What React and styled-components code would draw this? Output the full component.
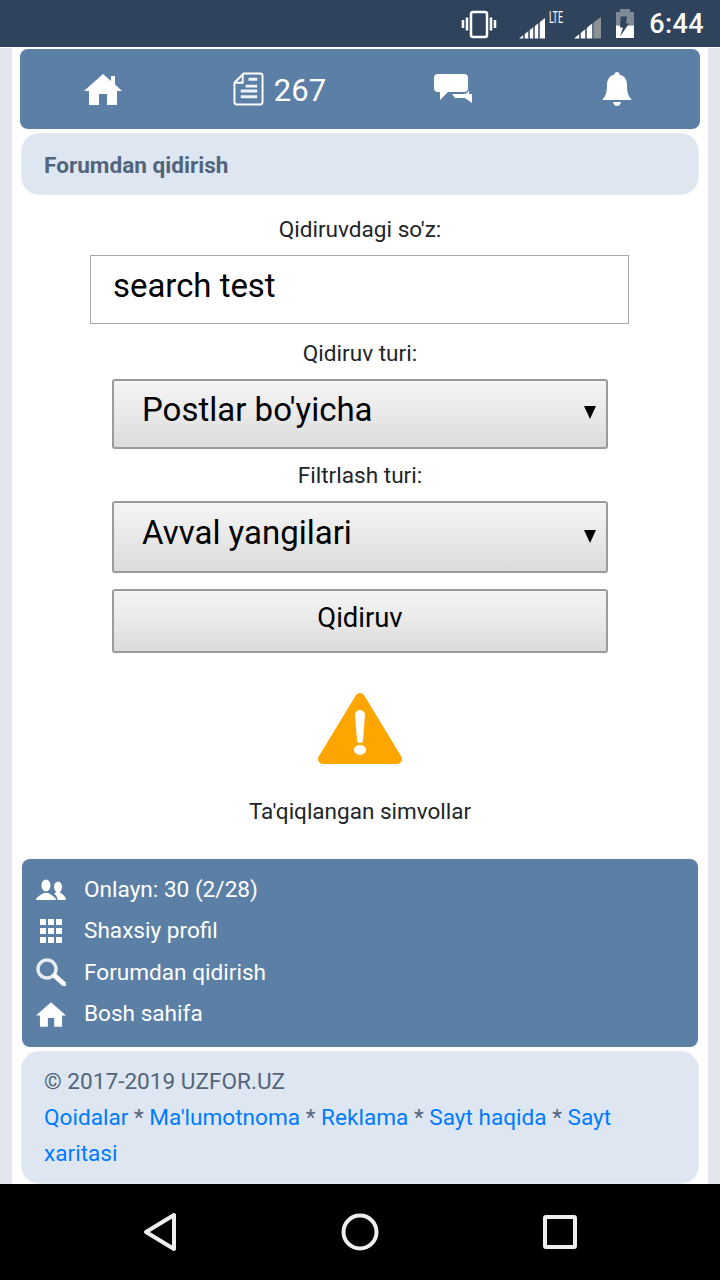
import React from 'react';
import styled, { createGlobalStyle } from 'styled-components';

const Global = createGlobalStyle`
  html, body { margin: 0; padding: 0; background: #e2e6ec; }
  * { box-sizing: border-box; }
  body { font-family: Roboto, "Liberation Sans", sans-serif; }
`;

const Screen = styled.div`
  width: 720px;
  height: 1280px;
  display: flex;
  flex-direction: column;
  overflow: hidden;
`;

const StatusBar = styled.div`
  height: 48px;
  flex: none;
  background: #2f445c;
  border-bottom: 1px solid #fff;
  display: flex;
  align-items: center;
  justify-content: flex-end;
  color: #fff;
  padding: 0 16px 0 0;
`;
const StatusIcon = styled.svg`
  display: block;
  flex: none;
  overflow: visible;
  margin-right: ${({ $gap }) => $gap || 0}px;
`;
const Clock = styled.span`
  font-size: 27px;
  font-weight: 500;
  line-height: 48px;
  letter-spacing: 0.4px;
`;

const Content = styled.main`
  flex: 1;
  min-height: 0;
  margin: 0 12px;
  background: #fff;
  padding: 1px 8px 0;
  display: flex;
  flex-direction: column;
  overflow: hidden;
`;

const TopNav = styled.nav`
  height: 80px;
  flex: none;
  background: #5c7fa6;
  border-radius: 8px;
  display: grid;
  grid-template-columns: 166px 187px 160px 167px;
  align-items: center;
  color: #fff;
`;
const NavItem = styled.div`
  display: flex;
  align-items: center;
  justify-content: center;
  gap: 10px;
  font-size: 31px;
  height: 80px;
`;
const NavCount = styled.span`
  padding-top: 2px;
`;

const Heading = styled.h1`
  margin: 4px 1px 0;
  height: 62px;
  flex: none;
  background: #dee7f1;
  border: 1px solid #e8edf3;
  border-radius: 18px;
  font-size: 22.6px;
  font-weight: 700;
  color: #52657d;
  display: flex;
  align-items: center;
  padding: 2px 22px 0;
`;

const Form = styled.form`
  display: flex;
  flex-direction: column;
  align-items: center;
  margin: 0;
`;
const Label = styled.label`
  font-size: 22.6px;
  line-height: 24px;
  color: #212529;
  text-align: center;
  margin: ${({ $top }) => $top}px 0 ${({ $bottom }) => $bottom}px;
`;
const SearchInput = styled.input`
  width: 539px;
  height: 69px;
  margin-left: -1px;
  border: 1px solid #a9a9a9;
  border-radius: 0;
  padding: 0 22px 9px;
  font: 400 32.9px Roboto, sans-serif;
  color: #000;
  background: #fff;
  outline: none;
`;
const SelectWrap = styled.div`
  position: relative;
  width: 496px;
`;
const Select = styled.select`
  appearance: none;
  display: block;
  width: 496px;
  height: ${({ $h }) => $h}px;
  border: 2px solid #9b9b9b;
  border-radius: 3px;
  background: linear-gradient(#f5f5f5, #dcdcdc);
  padding: 0 28px 9px;
  font: 400 33px Roboto, sans-serif;
  color: #000;
  outline: none;
`;
const Arrow = styled.span`
  position: absolute;
  right: 12px;
  top: ${({ $top }) => $top}px;
  width: 0;
  height: 0;
  border-left: 6px solid transparent;
  border-right: 6px solid transparent;
  border-top: 13px solid #000;
  pointer-events: none;
`;
const SubmitButton = styled.button`
  display: block;
  width: 496px;
  height: 64px;
  margin-top: 16px;
  border: 2px solid #9b9b9b;
  border-radius: 3px;
  background: linear-gradient(#f5f5f5, #dcdcdc);
  font: 400 27.4px Roboto, sans-serif;
  color: #000;
  padding: 0 0 6px;
`;

const Notice = styled.section`
  display: flex;
  flex-direction: column;
  align-items: center;
  margin-top: 39px;
  font-size: 22.5px;
  color: #212529;
`;
const NoticeText = styled.p`
  margin: 31px 0 0;
  line-height: 28px;
`;

const InfoPanel = styled.section`
  margin: 34px 2px 0;
  flex: none;
  height: 188px;
  background: #5c7fa6;
  border-radius: 8px;
  padding: 10px 0 0 14px;
  color: #fff;
`;
const InfoRow = styled.div`
  display: flex;
  align-items: center;
  height: 41.3px;
  font-size: 22.6px;
`;
const InfoIcon = styled.span`
  width: 48px;
  flex: none;
  display: flex;
  align-items: center;
  justify-content: flex-start;
`;

const Footer = styled.footer`
  margin: 4px 1px 0;
  flex: 1;
  background: #dee7f1;
  border: 1px solid #e8edf3;
  border-radius: 18px;
  padding: 12px 22px 0;
  font-size: 22.6px;
  line-height: 36px;
  color: #52657d;
`;
const FootLink = styled.a`
  color: #007bff;
  text-decoration: none;
`;

const NavBar = styled.div`
  height: 96px;
  flex: none;
  background: #000;
  display: grid;
  grid-template-columns: 320px 80px 320px;
  align-items: center;
  justify-items: center;
`;

const HomeGlyph = () => (
  <svg width="38" height="32" viewBox="0 0 38 32" fill="#fff">
    <path d="M19 1 L27 8 V3 H31 V11.5 L38 18 H33 V32 H23 V21 H15 V32 H5 V18 H0 Z" />
  </svg>
);

export default function App() {
  return (
    <Screen>
      <Global />
      <StatusBar>
        <StatusIcon $gap={22} width="36" height="28" viewBox="0 0 36 28" fill="none" stroke="#fff">
          <rect x="10" y="2" width="16" height="25" rx="2" strokeWidth="2.5" />
          <path d="M6 7.500v13M2 10v8M30 7.500v13M34 10v8" strokeWidth="2.500" />
        </StatusIcon>
        <StatusIcon $gap={9} width="46" height="30" viewBox="0 0 46 30">
          <path d="M0 29.500 L26 29.500 L26 9 Z" fill="#fff" />
          <path d="M5 30V23M10 30V19M15 30V15M20 30V11" stroke="#2f445c" strokeWidth="1.500" />
          <text transform="translate(30 14) scale(0.56 1)" fontSize="16" fill="#fff" fontFamily="Roboto">LTE</text>
        </StatusIcon>
        <StatusIcon $gap={14} width="28" height="30" viewBox="0 0 28 30">
          <path d="M0 29.500 L20 29.500 L20 13 Z" fill="#fff" />
          <path d="M20 29.500 V13 L27 8 V29.500Z" fill="#8c9196" />
          <path d="M6 30V23M12 30V17M19 30V11" stroke="#2f445c" strokeWidth="1.500" />
        </StatusIcon>
        <StatusIcon $gap={13} width="20" height="30" viewBox="0 0 20 30">
          <path d="M4 0h10v3h4v13.500H0V3h4z" fill="#7f8a96" />
          <path d="M0 16.500H18V29H0Z" fill="#fff" />
          <path d="M11 7.500H4.700L4 18.500H7L4 27.500L13 14.500H10Z" fill="#2f445c" />
        </StatusIcon>
        <Clock>6:44</Clock>
      </StatusBar>

      <Content>
        <TopNav>
          <NavItem><HomeGlyph /></NavItem>
          <NavItem>
            <svg width="31" height="36" viewBox="0 0 32 36" fill="none" stroke="#fff" strokeWidth="2">
              <path d="M11 2H28a2.500 2.500 0 0 1 2.500 2.500V31.500A2.500 2.500 0 0 1 28 34H4a2.500 2.500 0 0 1-2.500-2.500V11.500Z" />
              <path d="M10 3V11.500H2" />
              <path d="M16 8h9M13 15h12M8 20h17M8 26h17" strokeWidth="3" opacity="0.9" />
            </svg>
            <NavCount>267</NavCount>
          </NavItem>
          <NavItem>
            <svg width="38" height="30" viewBox="0 0 38 30" fill="#fff">
              <path d="M4 0H30a4 4 0 0 1 4 4V14a4 4 0 0 1-4 4H14L6 26V18H4a4 4 0 0 1-4-4V4a4 4 0 0 1 4-4Z" />
              <path d="M35 15V20H38L38 29L31 24H21L18 20H30a5 5 0 0 0 5-5Z" />
            </svg>
          </NavItem>
          <NavItem>
            <svg width="30" height="34" viewBox="0 0 30 34" fill="#fff">
              <path d="M15 0c1.500 0 2.500 1 2.500 2.500C23 4 25 8 25 13c0 7 1 11 5 15H0c4-4 5-8 5-15 0-5 2-9 7.500-10.500C12.500 1 13.500 0 15 0Z" />
              <path d="M11 30h8c-1 3-2 4-4 4s-3-1-4-4Z" />
            </svg>
          </NavItem>
        </TopNav>

        <Heading>Forumdan qidirish</Heading>

        <Form>
          <Label $top={23} $bottom={13}>Qidiruvdagi so'z:</Label>
          <SearchInput defaultValue="search test" />
          <Label $top={18} $bottom={13}>Qidiruv turi:</Label>
          <SelectWrap>
            <Select $h={70} defaultValue="posts">
              <option value="posts">Postlar bo'yicha</option>
            </Select>
            <Arrow $top={27} />
          </SelectWrap>
          <Label $top={15} $bottom={13}>Filtrlash turi:</Label>
          <SelectWrap>
            <Select $h={72} defaultValue="new">
              <option value="new">Avval yangilari</option>
            </Select>
            <Arrow $top={29} />
          </SelectWrap>
          <SubmitButton type="button">Qidiruv</SubmitButton>
        </Form>

        <Notice>
          <svg width="84" height="74" viewBox="0 0 84 74">
            <path d="M42 6 L79 67 H5 Z" fill="#ffa500" stroke="#ffa500" strokeWidth="10" strokeLinejoin="round" />
            <path d="M37 23 a5 5 0 0 1 10 0 L45 48 a3 3 0 0 1 -6 0 Z" fill="#fff" />
            <ellipse cx="42" cy="58" rx="6" ry="5" fill="#fff" />
          </svg>
          <NoticeText>Ta'qiqlangan simvollar</NoticeText>
        </Notice>

        <InfoPanel>
          <InfoRow>
            <InfoIcon>
              <svg width="30" height="22" viewBox="0 0 30 22" fill="#fff">
                <ellipse cx="10" cy="6.500" rx="4.500" ry="6" />
                <path d="M0 21c0-3 5-5 7.500-7h5c2.500 2 7.500 4 7.500 7Z" />
                <ellipse cx="22" cy="8" rx="4" ry="5.500" />
                <path d="M21.500 21c0-2.500-1.500-5-3.500-6.500l2.500-1.500h3c1.500 1.500 6.500 3.500 6.500 8Z" />
              </svg>
            </InfoIcon>
            Onlayn: 30 (2/28)
          </InfoRow>
          <InfoRow>
            <InfoIcon>
              <svg width="30" height="24" viewBox="0 0 30 24" fill="#fff">
                <path d="M4 0h6v6H4zM12 0h6v6h-6zM20 0h6v6h-6zM4 9h6v6H4zM12 9h6v6h-6zM20 9h6v6h-6zM4 18h6v6H4zM12 18h6v6h-6zM20 18h6v6h-6z" />
              </svg>
            </InfoIcon>
            Shaxsiy profil
          </InfoRow>
          <InfoRow>
            <InfoIcon>
              <svg width="30" height="28" viewBox="0 0 30 28" fill="none" stroke="#fff">
                <circle cx="11" cy="11" r="9" strokeWidth="3.500" opacity="0.85" />
                <path d="M19 18 L28 26" strokeWidth="5" strokeLinecap="round" />
              </svg>
            </InfoIcon>
            Forumdan qidirish
          </InfoRow>
          <InfoRow>
            <InfoIcon>
              <svg width="30" height="26" viewBox="0 0 38 32" fill="#fff">
                <path d="M19 1 L38 18 H33 V32 H23 V21 H15 V32 H5 V18 H0 Z" />
              </svg>
            </InfoIcon>
            Bosh sahifa
          </InfoRow>
        </InfoPanel>

        <Footer>
          © 2017-2019 UZFOR.UZ<br />
          <FootLink href="#">Qoidalar</FootLink> * <FootLink href="#">Ma'lumotnoma</FootLink> * <FootLink href="#">Reklama</FootLink> * <FootLink href="#">Sayt haqida</FootLink> * <FootLink href="#">Sayt xaritasi</FootLink>
        </Footer>
      </Content>

      <NavBar>
        <svg width="36" height="40" viewBox="0 0 36 40" fill="none" stroke="#eee" strokeWidth="4" strokeLinejoin="round">
          <path d="M32 3 V37 L4 20 Z" />
        </svg>
        <svg width="40" height="40" viewBox="0 0 40 40" fill="none" stroke="#eee" strokeWidth="4">
          <circle cx="20" cy="20" r="16.500" />
        </svg>
        <svg width="36" height="36" viewBox="0 0 36 36" fill="none" stroke="#eee" strokeWidth="4" strokeLinejoin="round">
          <rect x="3" y="3" width="30" height="30" rx="1" />
        </svg>
      </NavBar>
    </Screen>
  );
}
